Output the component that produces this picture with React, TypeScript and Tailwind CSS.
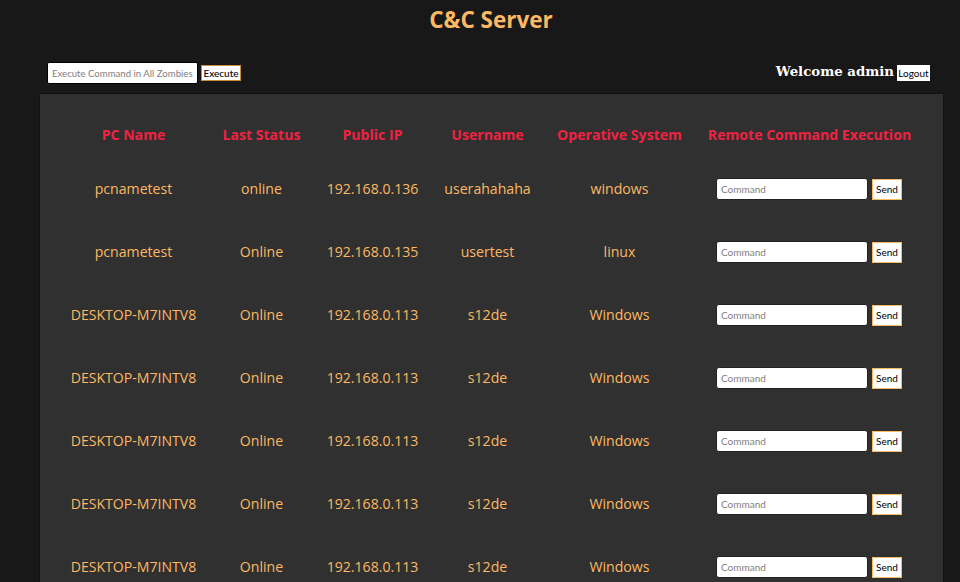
import React from 'react';

const zombies = [
  { name: 'pcnametest', status: 'online', ip: '192.168.0.136', user: 'userahahaha', os: 'windows' },
  { name: 'pcnametest', status: 'Online', ip: '192.168.0.135', user: 'usertest', os: 'linux' },
  { name: 'DESKTOP-M7INTV8', status: 'Online', ip: '192.168.0.113', user: 's12de', os: 'Windows' },
  { name: 'DESKTOP-M7INTV8', status: 'Online', ip: '192.168.0.113', user: 's12de', os: 'Windows' },
  { name: 'DESKTOP-M7INTV8', status: 'Online', ip: '192.168.0.113', user: 's12de', os: 'Windows' },
  { name: 'DESKTOP-M7INTV8', status: 'Online', ip: '192.168.0.113', user: 's12de', os: 'Windows' },
  { name: 'DESKTOP-M7INTV8', status: 'Online', ip: '192.168.0.113', user: 's12de', os: 'Windows' },
];

const headers = ['PC Name', 'Last Status', 'Public IP', 'Username', 'Operative System', 'Remote Command Execution'];
const rowCols = 'grid grid-cols-[152px_104px_118px_112px_152px_228px] items-center text-center';

export default function App() {
  return (
    <div className="h-[582px] w-[960px] overflow-hidden bg-[#181818] font-['Open_Sans',sans-serif]">
      <h1 className="h-[57px] pl-[22px] pt-[3px] text-center text-[22.5px] leading-[33px] font-bold text-[#fcb862]">C&amp;C Server</h1>

      <div className="flex h-[36px] items-start justify-between pl-[47px] pr-[30px]">
        <div className="flex items-center gap-[3px] pt-[5px]">
          <input
            placeholder="Execute Command in All Zombies"
            className="h-[22px] w-[151px] rounded-[2px] border border-black bg-white px-[4px] font-['Lato',sans-serif] text-[9.6px] text-black placeholder:text-[#808080] focus:outline-none"
          />
          <button className="h-[16px] w-[40px] border border-[#c98a3c] bg-white font-['Lato',sans-serif] text-[10px] leading-none font-medium text-black">Execute</button>
        </div>
        <div className="flex items-center gap-[3px] pt-[6px]">
          <span className="font-['DejaVu_Serif',serif] text-[13.3px] leading-[18px] font-bold text-white">Welcome admin</span>
          <button className="mt-[2px] h-[16px] w-[33px] bg-white font-['Lato',sans-serif] text-[10px] leading-none text-black">Logout</button>
        </div>
      </div>

      <div className="ml-[39px] h-[500px] w-[905px] rounded-[1px] border border-[#111111] bg-[#303030] pl-[17.5px]">
        <div className={`${rowCols} h-[63px] pt-[19px] text-[14.1px] font-bold text-[#f02242]`}>
          {headers.map(h => <div key={h} className="whitespace-nowrap">{h}</div>)}
        </div>
        {zombies.map((z, i) => (
          <div key={i} className={`${rowCols} h-[63px] text-[14.1px] text-[#fcb862]`}>
            <div>{z.name}</div>
            <div>{z.status}</div>
            <div>{z.ip}</div>
            <div>{z.user}</div>
            <div>{z.os}</div>
            <div className="flex items-center gap-[4px] pl-[20.5px] pt-[1px]">
              <input
                placeholder="Command"
                className="h-[22px] w-[152px] rounded-[3px] border border-[#222222] bg-white px-[4px] font-['Lato',sans-serif] text-[10px] text-black placeholder:text-[#808080] focus:outline-none"
              />
              <button className="h-[21px] w-[30px] border border-[#fcb862] bg-white font-['Lato',sans-serif] text-[10px] leading-none text-black">Send</button>
            </div>
          </div>
        ))}
      </div>
    </div>
  );
}
